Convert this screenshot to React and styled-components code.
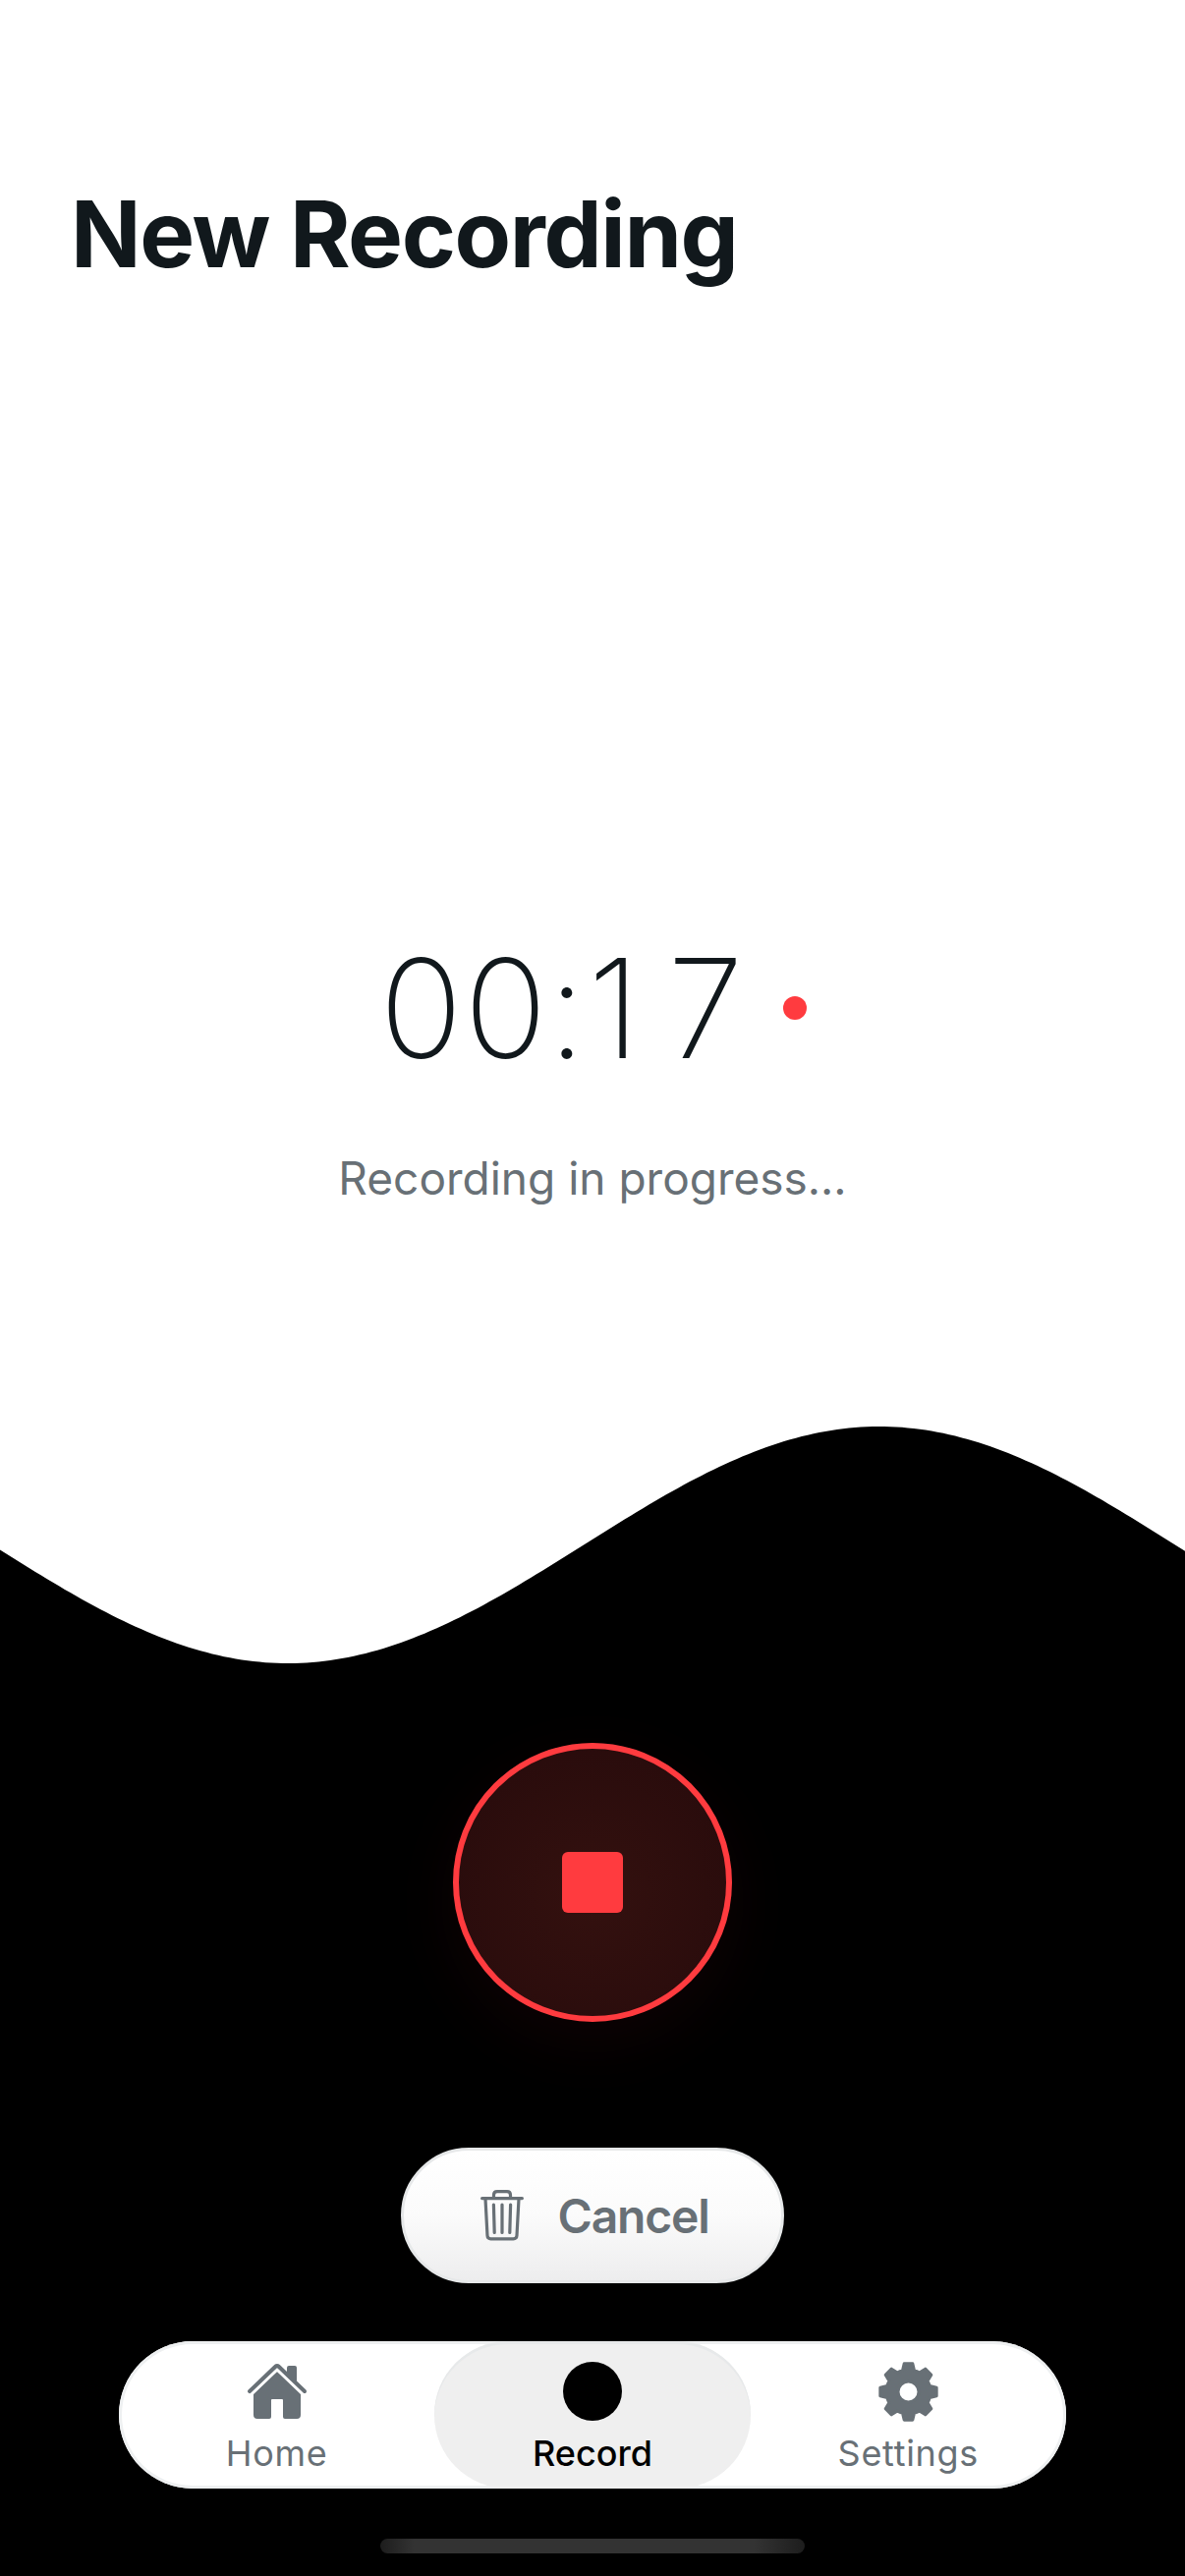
import React from 'react';
import styled, { createGlobalStyle } from 'styled-components';
import { IoHome } from 'react-icons/io5';

const Global = createGlobalStyle`
  html, body { margin: 0; padding: 0; background: #000; }
  #root { width: 1206px; height: 2622px; overflow: hidden; }
  * { box-sizing: border-box; }
`;

const Screen = styled.div`
  width: 1206px;
  height: 2622px;
  display: flex;
  flex-direction: column;
  font-family: Inter, "Liberation Sans", sans-serif;
`;

const Upper = styled.section`
  height: 1452px;
  background: #fff;
  display: flex;
  flex-direction: column;
  align-items: stretch;
`;

const Title = styled.h1`
  margin: 181px 0 0 72px;
  font-size: 94px;
  line-height: 114px;
  font-weight: 700;
  color: #11181c;
  letter-spacing: -1.4px;
`;

const TimerRow = styled.div`
  margin-top: 643px;
  display: flex;
  align-items: center;
  justify-content: center;
  gap: 24px;
`;

const Timer = styled.div`
  display: flex;
  font-size: 140px;
  line-height: 176px;
  font-weight: 170;
  color: #11181c;
`;

const Glyph = styled.span`
  width: ${p => p.$w}px;
  text-align: center;
`;

const LiveDot = styled.span`
  width: 24px;
  height: 24px;
  border-radius: 50%;
  background: #ff3b3f;
`;

const Status = styled.p`
  margin: 57px 0 0;
  text-align: center;
  font-size: 46px;
  line-height: 56px;
  font-weight: 400;
  color: #687076;
`;

const Lower = styled.section`
  flex: 1;
  background: #000;
  display: flex;
  flex-direction: column;
  align-items: center;
`;

const Wave = styled.svg`
  display: block;
  width: 1206px;
  height: 241px;
  flex: none;
`;

const RecordButton = styled.button`
  margin-top: 81px;
  width: 284px;
  height: 284px;
  padding: 0;
  border-radius: 50%;
  border: 6px solid #ff3b3f;
  background: radial-gradient(circle at 50% 55%, #34110f 0%, #260a0b 100%);
  box-shadow: 0 20px 70px rgba(255, 59, 63, 0.06);
  display: flex;
  align-items: center;
  justify-content: center;
`;

const StopIcon = styled.span`
  width: 62px;
  height: 62px;
  border-radius: 6px;
  background: #ff3b3f;
`;

const CancelButton = styled.button`
  margin-top: 128px;
  width: 390px;
  height: 138px;
  border-radius: 69px;
  border: 3px solid #e6e8e9;
  background: linear-gradient(180deg, #ffffff 0%, #fbfbfb 50%, #ededee 100%);
  display: flex;
  align-items: center;
  justify-content: center;
  gap: 34px;
  font-family: inherit;
  font-size: 48px;
  font-weight: 600;
  letter-spacing: -1.2px;
  color: #687076;
  padding: 0 0 0 5px;
`;

const Nav = styled.nav`
  margin-top: 59px;
  width: 964px;
  height: 150px;
  border-radius: 75px;
  box-shadow: inset 0 0 0 3px #eef0f1;
  background: #fff;
  display: grid;
  grid-template-columns: repeat(3, 1fr);
`;

const Tab = styled.div`
  border-radius: 75px;
  background: ${p => (p.$active ? '#efefef' : 'transparent')};
  box-shadow: ${p => (p.$active ? 'inset 0 3px 0 #e7e9ea' : 'none')};
  color: ${p => (p.$active ? '#000' : '#687076')};
  display: flex;
  flex-direction: column;
  align-items: center;
  padding-top: 21px;
  svg { display: block; }
`;

const IconSlot = styled.div`
  height: 60px;
  display: flex;
  align-items: center;
  justify-content: center;
`;

const RecordDot = styled.span`
  width: 60px;
  height: 60px;
  border-radius: 50%;
  background: #000;
`;

const TabLabel = styled.span`
  margin-top: 11px;
  font-size: 36px;
  line-height: 44px;
  font-weight: ${p => (p.$active ? 500 : 400)};
  letter-spacing: ${p => (p.$active ? 0 : '0.7px')};
`;

const HomeBar = styled.div`
  margin-top: 51px;
  width: 432px;
  height: 15px;
  border-radius: 8px;
  background: linear-gradient(90deg, #1d1d1d 0%, #333 8%, #333 88%, #1d1d1d 100%);
`;

/* White area above a sine curve: period 1204, trough at x=293, crest at x=895. */
const wavePath = () => {
  const pts = [];
  for (let x = 0; x <= 1206; x += 6) {
    const y = 120.5 + 120.5 * Math.cos((2 * Math.PI * (x - 293)) / 1204);
    pts.push(`${x} ${y.toFixed(2)}`);
  }
  return `M0 0 L${pts.join(' L')} L1206 0 Z`;
};

/* Eight-toothed gear with a round hole. */
const gearPath = () => {
  const c = 30.5, root = 22.5, tip = 29, n = 8;
  const seg = [];
  for (let i = 0; i < n; i++) {
    const a = (i * 2 * Math.PI) / n - Math.PI / 2;
    const at = (r, d) => `${(c + r * Math.cos(a + d)).toFixed(2)} ${(c + r * Math.sin(a + d)).toFixed(2)}`;
    seg.push(`${at(root, -0.27)} L${at(tip, -0.15)} L${at(tip, 0.15)} L${at(root, 0.27)}`);
    seg.push(`A${root} ${root} 0 0 1 ${(c + root * Math.cos(a + Math.PI / 4 - 0.27)).toFixed(2)} ${(c + root * Math.sin(a + Math.PI / 4 - 0.27)).toFixed(2)}`);
  }
  return `M${seg.join(' L').replace(/ L(A)/g, ' $1')} Z M${c + 10.5} ${c} A10.5 10.5 0 1 0 ${c - 10.5} ${c} A10.5 10.5 0 1 0 ${c + 10.5} ${c} Z`;
};

const TrashIcon = () => (
  <svg width="44" height="52" viewBox="0 0 44 52" fill="none" stroke="currentColor" strokeWidth="3.2" strokeLinecap="round" strokeLinejoin="round">
    <path d="M1.6 8.6H42.4" />
    <path d="M13.5 8V5.2Q13.5 1.6 17 1.6H27Q30.5 1.6 30.5 5.2V8" />
    <path d="M5 9L7 46.5Q7.2 49.8 10.5 49.8H33.5Q36.8 49.8 37 46.5L39 9" />
    <path d="M13.4 15L14.2 43.5M22 15V43.5M30.6 15L29.8 43.5" />
  </svg>
);

const GearIcon = () => (
  <svg width="61" height="61" viewBox="0 0 61 61" fill="currentColor" stroke="currentColor" strokeWidth="3" strokeLinejoin="round" fillRule="evenodd">
    <path d={gearPath()} />
  </svg>
);

const timerCells = [['0', 86], ['0', 86], [':', 29], ['1', 77], ['7', 109]];

export default function App() {
  return (
    <Screen>
      <Global />
      <Upper>
        <Title>New Recording</Title>
        <TimerRow>
          <Timer>
            {timerCells.map(([ch, w], i) => (
              <Glyph key={i} $w={w}>{ch}</Glyph>
            ))}
          </Timer>
          <LiveDot />
        </TimerRow>
        <Status>Recording in progress...</Status>
      </Upper>
      <Lower>
        <Wave viewBox="0 0 1206 241">
          <path fill="#fff" d={wavePath()} />
        </Wave>
        <RecordButton aria-label="Stop">
          <StopIcon />
        </RecordButton>
        <CancelButton>
          <TrashIcon />
          Cancel
        </CancelButton>
        <Nav>
          <Tab>
            <IconSlot><IoHome size={64} /></IconSlot>
            <TabLabel>Home</TabLabel>
          </Tab>
          <Tab $active>
            <IconSlot><RecordDot /></IconSlot>
            <TabLabel $active>Record</TabLabel>
          </Tab>
          <Tab>
            <IconSlot><GearIcon /></IconSlot>
            <TabLabel>Settings</TabLabel>
          </Tab>
        </Nav>
        <HomeBar />
      </Lower>
    </Screen>
  );
}
